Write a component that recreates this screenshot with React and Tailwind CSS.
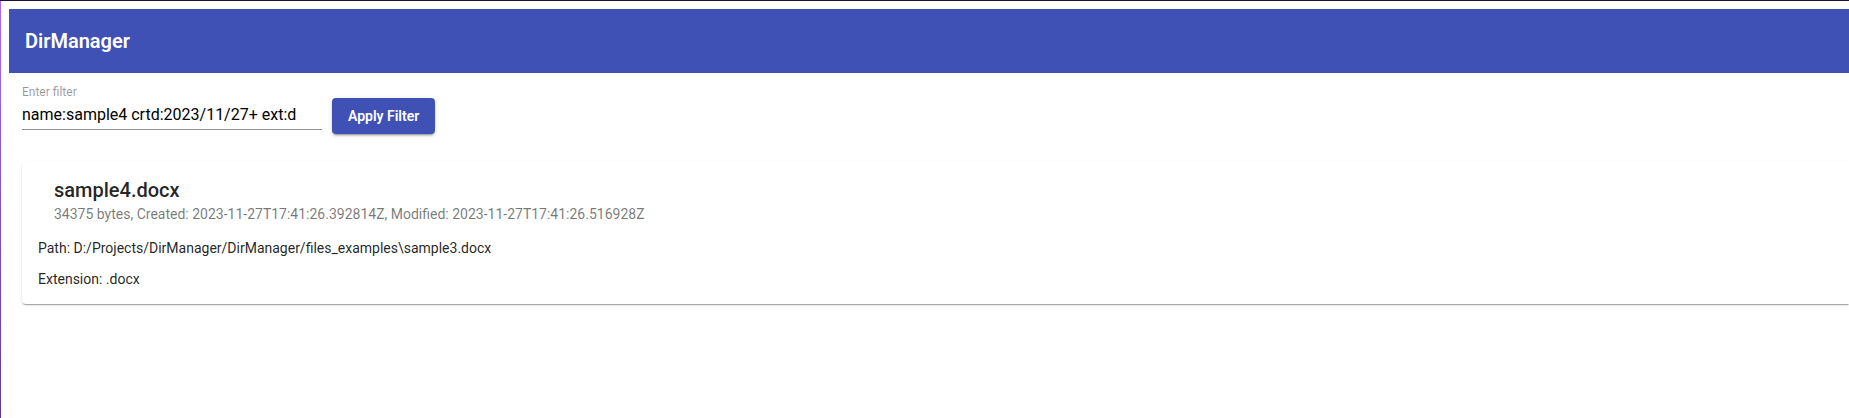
const files = [
  {
    name: "sample4.docx",
    meta: "34375 bytes, Created: 2023-11-27T17:41:26.392814Z, Modified: 2023-11-27T17:41:26.516928Z",
    path: "D:/Projects/DirManager/DirManager/files_examples\\sample3.docx",
    extension: ".docx",
  },
];

function FileCard({ file }) {
  return (
    <article className="rounded-l bg-white px-4 pt-4 pb-[15px] shadow-[0_2px_1px_-1px_rgba(0,0,0,0.2),0_1px_1px_0_rgba(0,0,0,0.14),0_1px_3px_0_rgba(0,0,0,0.12)]">
      <header className="px-4">
        <h2 className="text-xl leading-6 font-medium">{file.name}</h2>
        <p className="text-sm leading-6 text-black/54">{file.meta}</p>
      </header>
      <div className="mt-3 flex flex-col gap-[11px] text-sm">
        <p className="leading-5">Path: {file.path}</p>
        <p className="leading-5">Extension: {file.extension}</p>
      </div>
    </article>
  );
}

export default function App() {
  return (
    <div className="flex min-h-screen overflow-hidden border-t border-[#1c1038] bg-white font-['Roboto',sans-serif] text-black/87">
      <div className="w-px shrink-0 bg-linear-to-b from-[#a56cf5] to-[#5f3b96]" />
      <div className="min-w-0 grow pt-2 pl-2">
        <header className="flex h-16 items-center bg-[#3f51b5] px-4 text-white">
          <h1 className="text-xl leading-8 font-semibold">DirManager</h1>
        </header>
        <main className="pl-[13px]">
          <form className="flex items-end gap-2.5 pt-[11px]" onSubmit={(e) => e.preventDefault()}>
            <div className="mb-1 flex w-[300px] flex-col border-b border-black/42">
              <label htmlFor="filter" className="text-xs leading-4 text-black/42">
                Enter filter
              </label>
              <input
                id="filter"
                type="text"
                defaultValue="name:sample4 crtd:2023/11/27+ ext:d"
                className="mt-[5px] mb-1 h-5 w-full bg-transparent text-base leading-5 text-black outline-none"
              />
            </div>
            <button
              type="submit"
              className="h-9 rounded bg-[#3f51b5] px-4 text-sm font-semibold text-white shadow-[0_3px_1px_-2px_rgba(0,0,0,0.2),0_2px_2px_0_rgba(0,0,0,0.14),0_1px_5px_0_rgba(0,0,0,0.12)]"
            >
              Apply Filter
            </button>
          </form>
          <section className="mt-7">
            {files.map((file) => (
              <FileCard key={file.name} file={file} />
            ))}
          </section>
        </main>
      </div>
    </div>
  );
}
